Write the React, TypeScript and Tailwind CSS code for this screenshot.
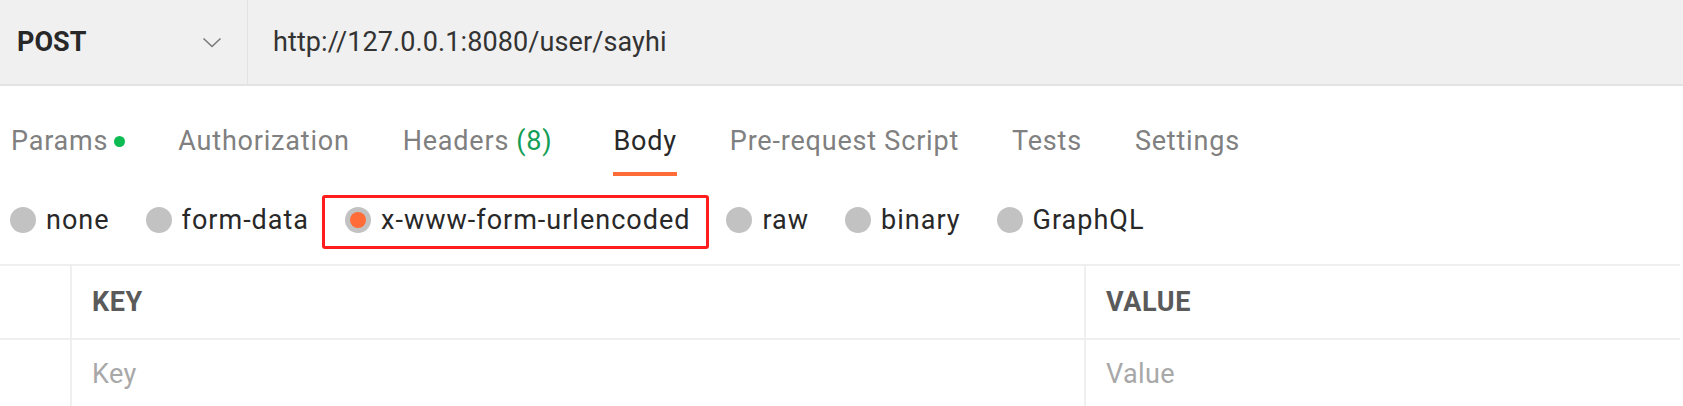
import React from "react";

const tabs = [
  { id: "params", label: "Params", dot: true },
  { id: "auth", label: "Authorization" },
  { id: "headers", label: "Headers", count: 8 },
  { id: "body", label: "Body" },
  { id: "pre", label: "Pre-request Script" },
  { id: "tests", label: "Tests" },
  { id: "settings", label: "Settings" },
];

const bodyModes = ["none", "form-data", "x-www-form-urlencoded", "raw", "binary", "GraphQL"];

function Chevron() {
  return (
    <svg width="20" height="11" viewBox="0 0 20 11" fill="none">
      <path d="M1.5 1.5 L10 9.5 L18.5 1.5" stroke="#7a7a7a" strokeWidth="1.6" />
    </svg>
  );
}

export default function App() {
  const active = "body";
  const mode = "x-www-form-urlencoded";

  return (
    <div className="w-[1683px] h-[406px] overflow-hidden bg-white [font-family:Roboto,'Liberation_Sans',sans-serif]">
      {/* request line */}
      <div className="flex h-[86px] bg-[#f0f0f0] border-b-2 border-[#e3e3e3]">
        <div className="flex w-[248px] items-center justify-between border-r border-[#e2e2e2] pl-[17px] pr-[25px]">
          <span className="text-[27px] font-bold text-[#282828]">POST</span>
          <Chevron />
        </div>
        <div className="flex items-center pl-[25px] text-[27px] tracking-[0.1px] text-[#333]">
          http://127.0.0.1:8080/user/sayhi
        </div>
      </div>

      {/* tabs */}
      <div className="flex h-[90px] gap-[53px] pl-[11px]">
        {tabs.map((t) => (
          <div
            key={t.id}
            className={
              "flex items-center border-b-4 pt-[24px] text-[27px] tracking-[0.8px] " +
              (t.id === active
                ? "border-[#ff6c37] text-[#282828]"
                : "border-transparent text-[#808080]")
            }
          >
            <span>{t.label}</span>
            {t.dot ? <span className="ml-[6px] h-[11px] w-[11px] rounded-full bg-[#0cbb52]" /> : null}
            {t.count ? <span className="ml-[7px] mr-[8px] text-[#139e57]">({t.count})</span> : null}
          </div>
        ))}
      </div>

      {/* body type */}
      <div className="flex h-[88px] items-center gap-[36px] pl-[10px]">
        {bodyModes.map((m) => (
          <div key={m} className="relative flex h-[26px] items-center gap-[10px] text-[27px] tracking-[1px] text-[#282828]">
            <span className="flex h-[26px] w-[26px] items-center justify-center rounded-full bg-[#c2c2c2]">
              {m === mode ? <span className="h-[16px] w-[16px] rounded-full bg-[#ff6c37]" /> : null}
            </span>
            <span>{m}</span>
            {m === mode ? (
              <span className="absolute -left-[23px] -right-[19px] -top-[12px] -bottom-[16px] rounded-[3px] border-[3px] border-[#ff1c1c]" />
            ) : null}
          </div>
        ))}
      </div>

      {/* key / value table */}
      <div className="w-[1680px] border-t-2 border-[#efefef]">
        <div className="flex h-[74px] border-b-2 border-[#efefef]">
          <div className="w-[72px] border-r-2 border-[#efefef]" />
          <div className="flex w-[1014px] items-center border-r-2 border-[#efefef] pl-[20px] text-[27px] font-bold tracking-[0.6px] text-[#5a5a5a]">
            KEY
          </div>
          <div className="flex flex-1 items-center pl-[20px] text-[27px] font-bold tracking-[0.6px] text-[#5a5a5a]">
            VALUE
          </div>
        </div>
        <div className="flex h-[72px]">
          <div className="w-[72px] border-r-2 border-[#efefef]" />
          <div className="flex w-[1014px] items-center border-r-2 border-[#efefef] pb-[4px] pl-[20px] text-[27px] tracking-[0.4px] text-[#a8a8a8]">
            Key
          </div>
          <div className="flex flex-1 items-center pb-[4px] pl-[20px] text-[27px] tracking-[0.4px] text-[#a8a8a8]">
            Value
          </div>
        </div>
      </div>
    </div>
  );
}
